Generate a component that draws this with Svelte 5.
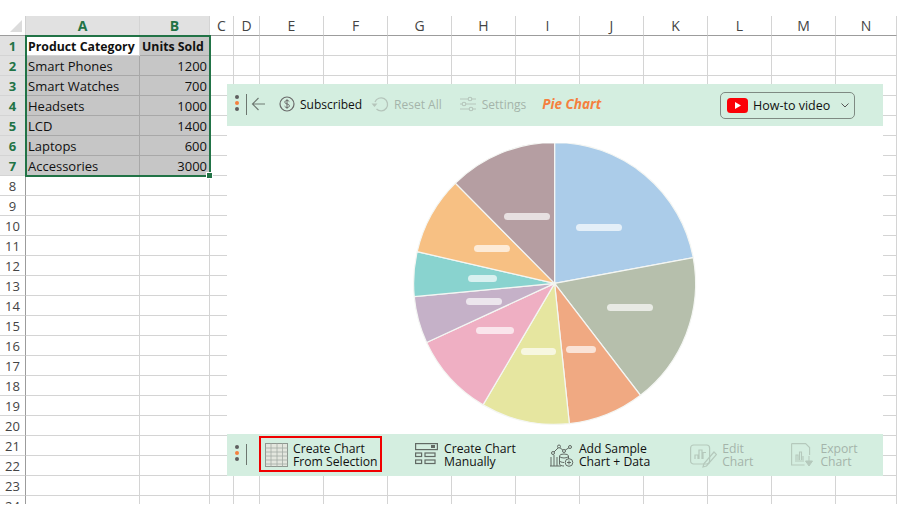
<script>
  const cols = [
    { l: 'A', w: 114, on: true }, { l: 'B', w: 70, on: true }, { l: 'C', w: 24 }, { l: 'D', w: 26 },
    { l: 'E', w: 64 }, { l: 'F', w: 64 }, { l: 'G', w: 64 }, { l: 'H', w: 64 }, { l: 'I', w: 64 },
    { l: 'J', w: 64 }, { l: 'K', w: 64 }, { l: 'L', w: 64 }, { l: 'M', w: 64 }, { l: 'N', w: 61 }
  ];
  const data = [
    ['Product Category', 'Units Sold'], ['Smart Phones', 1200], ['Smart Watches', 700], ['Headsets', 1000],
    ['LCD', 1400], ['Laptops', 600], ['Accessories', 3000]
  ];
  const rows = Array.from({ length: 24 }, (_, i) => i + 1);
  const template = '26px ' + cols.map((c) => c.w + 'px').join(' ');

  const cx = 154.6, cy = 140.4, r = 141;
  const slices = [
    { a: 0, b: 79.5, c: '#abcce9', x: 176, y: 81, w: 46 },
    { a: 79.5, b: 142.5, c: '#b6bfac', x: 207, y: 161, w: 46 },
    { a: 142.5, b: 174, c: '#f0a982', x: 166, y: 203, w: 30 },
    { a: 174, b: 210.5, c: '#e6e6a0', x: 121, y: 205, w: 35 },
    { a: 210.5, b: 245.2, c: '#efafc3', x: 76, y: 184, w: 38 },
    { a: 245.2, b: 264.6, c: '#c5b1c8', x: 66, y: 155, w: 36 },
    { a: 264.6, b: 283, c: '#89d3cf', x: 68, y: 132, w: 29 },
    { a: 283, b: 315.3, c: '#f7c083', x: 74, y: 102, w: 36 },
    { a: 315.3, b: 360, c: '#b59ea2', x: 104, y: 70, w: 46 }
  ];
  function pt(d) {
    const t = (d * Math.PI) / 180;
    return (cx + r * Math.sin(t)).toFixed(2) + ' ' + (cy - r * Math.cos(t)).toFixed(2);
  }
  function arc(s) {
    const large = s.b - s.a > 180 ? 1 : 0;
    return `M${cx} ${cy}L${pt(s.a)}A${r} ${r} 0 ${large} 1 ${pt(s.b)}Z`;
  }
</script>

<div class="page">
  <div class="sheet" style="grid-template-columns:{template}">
    <div class="corner"><svg width="12" height="12" viewBox="0 0 12 12"><path d="M12 0V12H0Z" fill="#dcdcdc" /></svg></div>
    {#each cols as c}
      <div class="colhead" class:on={c.on}>{c.l}</div>
    {/each}
    {#each rows as n}
      <div class="rowhead" class:on={n <= 7}>{n}</div>
      {#each cols as c, i}
        {#if n <= 7 && i === 0}
          <div class="cell" class:sel={n > 1} class:bold={n === 1}>{data[n - 1][0]}</div>
        {:else if n <= 7 && i === 1}
          <div class="cell sel" class:bold={n === 1} class:num={n > 1}>{data[n - 1][1]}</div>
        {:else}
          <div class="cell"></div>
        {/if}
      {/each}
    {/each}
  </div>

  <div class="selection"><span class="handle"></span></div>

  <div class="panel">
    <div class="bar top">
      <span class="dots"><i></i><i class="o"></i><i></i></span>
      <span class="sep"></span>
      <svg class="back" width="15" height="14" viewBox="0 0 15 14"><path d="M14 7H1.500M7.500 1L1.500 7l6 6" fill="none" stroke="#6f7a73" stroke-width="1.200" /></svg>
      <svg class="dollar" width="16" height="16" viewBox="0 0 16 16"><circle cx="8" cy="8" r="7" fill="none" stroke="#6a6a6a" stroke-width="1.200" /><path d="M10.300 5.600C9.800 4.800 9 4.500 8 4.500c-1.300 0-2.200.6-2.200 1.700 0 2.400 4.600 1.100 4.600 3.600 0 1.100-1 1.700-2.300 1.700-1.100 0-2-.4-2.500-1.300M8 3.200v9.600" fill="none" stroke="#6a6a6a" stroke-width="1" /></svg>
      <span class="t sub">Subscribed</span>
      <svg class="reset" width="18" height="16" viewBox="0 0 18 16"><path d="M4 6a6.500 6.500 0 1 1 1.500 7" fill="none" stroke="#b5c5bb" stroke-width="1.300" /><path d="M0.500 7.500h6L3.500 11Z" fill="#b5c5bb" /></svg>
      <span class="t dim resettext">Reset All</span>
      <svg class="sliders" width="16" height="16" viewBox="0 0 16 16"><g fill="none" stroke="#b5c5bb" stroke-width="1.100"><path d="M0 3h8M12 3h4M0 8h2M6 8h10M0 13h9M13 13h3" /><circle cx="10" cy="3" r="1.800" /><circle cx="4" cy="8" r="1.800" /><circle cx="11" cy="13" r="1.800" /></g></svg>
      <span class="t dim settext">Settings</span>
      <span class="title">Pie Chart</span>
      <div class="howto">
        <svg width="21" height="15" viewBox="0 0 21 15"><rect width="21" height="15" rx="3.500" fill="#fb0007" /><path d="M8 4l6 3.500-6 3.500Z" fill="#fff" /></svg>
        <span class="t vid">How-to video</span>
        <svg class="chev" width="8" height="5" viewBox="0 0 8 5"><path d="M.5.500L4 4 7.500.500" fill="none" stroke="#555" stroke-width="1" /></svg>
      </div>
    </div>

    <div class="chart">
      <svg width="310" height="284" viewBox="0 0 310 284">
        {#each slices as s}
          <path d={arc(s)} fill={s.c} stroke="#f4f6f3" stroke-width="1.200" />
        {/each}
        {#each slices as s}
          <rect x={s.x} y={s.y} width={s.w} height="7" rx="3.500" fill="#fff" fill-opacity="0.68" />
        {/each}
      </svg>
    </div>

    <div class="bar bottom">
      <span class="dots"><i></i><i class="o"></i><i></i></span>
      <span class="sep"></span>
      <div class="action first">
        <svg width="23" height="24" viewBox="0 0 23 24"><rect x=".5" y=".5" width="22" height="23" fill="#e3e6de" stroke="#8f9891" /><path d="M.5 5h22M.5 9h22M.5 13h22M.5 17h22M.5 21h22M6 .500v23M12 .500v23M17.500 .500v23" stroke="#a3aba5" fill="none" stroke-width=".8" /></svg>
        <span class="lbl">Create Chart<br />From Selection</span>
      </div>
      <div class="action second">
        <svg width="23" height="24" viewBox="0 0 23 24"><g fill="none" stroke="#626a64" stroke-width="1.200"><rect x=".6" y=".6" width="21.800" height="6" /><rect x=".6" y="10" width="6" height="3.500" /><rect x="10" y="10" width="10" height="3.500" /><rect x=".6" y="17" width="6" height="3.500" /><rect x="10" y="17" width="10" height="3.500" /></g><rect x="16" y="2" width="4" height="3" fill="#626a64" /></svg>
        <span class="lbl wide">Create Chart<br />Manually</span>
      </div>
      <div class="action third">
        <svg width="24" height="24" viewBox="0 0 24 24"><g fill="none" stroke="#626a64" stroke-width="1"><path d="M3 10L9 4l5 4 6-4" /><circle cx="3" cy="10" r="1.500" fill="#d4eee0" /><circle cx="9" cy="3.500" r="1.500" fill="#d4eee0" /><circle cx="14" cy="8" r="1.500" fill="#d4eee0" /><circle cx="20" cy="4" r="1.500" fill="#d4eee0" /><path d="M1 14v9M4 12v11M7 14v9M0 23h11" /><ellipse cx="14" cy="13" rx="4.500" ry="2" /><path d="M9.500 13v8c0 1 2 2 4.500 2M18.500 13v3M9.500 17.500c0 1 2 2 4.500 2" /><circle cx="19" cy="19.500" r="3.800" fill="#d4eee0" /><path d="M19 17.500v4M17 19.500h4" /></g></svg>
        <span class="lbl">Add Sample<br />Chart + Data</span>
      </div>
      <div class="action fourth">
        <svg width="27" height="25" viewBox="0 0 27 25"><g fill="none" stroke="#b5c9bc" stroke-width="1.200"><rect x=".6" y="2" width="19" height="19" rx="3" /><path d="M5 16v-4h3v4M9 16V7h3v9M13 16V9.500h3" /><path d="M13 24l1-3.500L24 9l2.500 2.500L16.500 23Z" /></g></svg>
        <span class="lbl dim">Edit<br />Chart</span>
      </div>
      <div class="action fifth">
        <svg width="23" height="24" viewBox="0 0 23 24"><g fill="none" stroke="#b5c9bc" stroke-width="1.100"><path d="M.6.600h14l4 4V12M.6.600V22h13" /><path d="M4 18h9M5 17v-5h2v5M8.500 17v-8h2v8M12 17v-4" /></g><path d="M18 13v6M14.500 18h7L18 23Z" fill="#b5c9bc" stroke="#b5c9bc" /></svg>
        <span class="lbl dim wide">Export<br />Chart</span>
      </div>
    </div>
  </div>
</div>

<style>
  :global(body) {
    margin: 0;
    background: #fff;
  }
  .page {
    position: relative;
    width: 900px;
    height: 520px;
    overflow: hidden;
    font-family: "Open Sans", "Noto Sans", sans-serif;
    background: #fff;
  }
  .sheet {
    display: grid;
    grid-auto-rows: 20px;
    height: 488px;
    overflow: hidden;
    position: absolute;
    top: 16px;
    left: 0;
    font-size: 13px;
    color: #111;
  }
  .corner {
    display: flex;
    align-items: flex-end;
    justify-content: flex-end;
    padding: 0 3px 3px 0;
    box-sizing: border-box;
    height: 20px;
    border-bottom: 1px solid #9c9c9c;
    border-right: 1px solid #d0d0d0;
  }
  .corner svg {
    flex: none;
  }
  .colhead {
    box-sizing: border-box;
    border-right: 1px solid #d4d4d4;
    border-bottom: 1px solid #9c9c9c;
    text-align: center;
    line-height: 20px;
    color: #444;
    font-size: 14px;
  }
  .colhead.on {
    background: #e1e1e1;
    color: #217346;
    font-weight: 700;
  }
  .rowhead {
    box-sizing: border-box;
    border-right: 1px solid #9c9c9c;
    border-bottom: 1px solid #d4d4d4;
    text-align: center;
    line-height: 21px;
    color: #444;
  }
  .rowhead.on {
    background: #e1e1e1;
    color: #217346;
    font-weight: 700;
  }
  .cell {
    box-sizing: border-box;
    border-right: 1px solid #d4d4d4;
    border-bottom: 1px solid #d4d4d4;
    padding: 0 2px;
    line-height: 21px;
    white-space: nowrap;
    overflow: hidden;
  }
  .cell.sel {
    background: #c6c6c6;
    border-color: #a8a8a8;
  }
  .cell.bold {
    font-weight: 700;
    font-size: 12.300px;
  }
  .cell.num {
    text-align: right;
  }
  .selection {
    position: absolute;
    left: 25px;
    top: 35px;
    width: 186px;
    height: 142px;
    box-sizing: border-box;
    border: 2px solid #217346;
  }
  .handle {
    position: absolute;
    right: -4px;
    bottom: -4px;
    width: 5px;
    height: 5px;
    background: #217346;
    border: 1px solid #fff;
  }
  .panel {
    position: absolute;
    left: 227px;
    top: 84px;
    width: 656px;
    height: 392px;
    background: #fff;
    display: flex;
    flex-direction: column;
  }
  .bar {
    flex: none;
    height: 42px;
    box-sizing: border-box;
    background: #d4eee0;
    display: flex;
    align-items: center;
    font-size: 12px;
    color: #111;
  }
  .bar.top {
    padding-bottom: 2px;
  }
  .dots {
    display: flex;
    flex-direction: column;
    gap: 2px;
    margin-left: 8px;
    width: 4px;
    margin-bottom: 2px;
  }
  .bottom .dots {
    margin-bottom: 4px;
  }
  .bottom .sep {
    margin-bottom: 2px;
  }
  .dots i {
    display: block;
    width: 4px;
    height: 4px;
    border-radius: 50%;
    background: #5f5f5f;
  }
  .dots i.o {
    background: #f5803e;
  }
  .sep {
    width: 1px;
    height: 21px;
    margin-left: 7px;
    background: #6c766f;
  }
  .t {
    white-space: nowrap;
  }
  .dim {
    color: #a4b4aa;
  }
  .back {
    margin-left: 4px;
  }
  .dollar {
    margin-left: 13px;
  }
  .sub {
    margin-left: 5px;
  }
  .reset {
    margin-left: 9px;
  }
  .resettext {
    margin-left: 5px;
  }
  .sliders {
    margin-left: 18px;
  }
  .settext {
    margin-left: 6px;
  }
  .title {
    margin-left: 16px;
    color: #f5803e;
    font-weight: 700;
    font-style: italic;
    font-size: 13.500px;
    white-space: nowrap;
  }
  .howto {
    margin-left: auto;
    margin-right: 28px;
    margin-top: 2px;
    width: 135px;
    height: 27px;
    box-sizing: border-box;
    border: 1px solid #7f8a83;
    border-radius: 5px;
    display: flex;
    align-items: center;
    padding-left: 6px;
    font-size: 12.500px;
  }
  .vid {
    margin-left: 5px;
  }
  .chev {
    margin-left: auto;
    margin-right: 5px;
  }
  .chart {
    flex: 1;
    display: flex;
    justify-content: center;
    padding-top: 17px;
    box-sizing: border-box;
    min-height: 0;
  }
  .chart svg {
    margin-left: -1px;
  }
  .action {
    display: flex;
    align-items: center;
    white-space: nowrap;
  }
  .lbl {
    line-height: 13px;
    margin-left: 5px;
    font-size: 12.200px;
  }
  .lbl.wide {
    margin-left: 6px;
  }
  .first {
    box-sizing: border-box;
    height: 36px;
    width: 123px;
    margin-left: 12px;
    margin-bottom: 2px;
    padding-left: 4px;
    border: 2px solid #f00000;
  }
  .first svg {
    margin-top: 2px;
  }
  .first .lbl {
    margin-top: 2px;
  }
  .second {
    margin-left: 33px;
  }
  .third {
    margin-left: 34px;
  }
  .fourth {
    margin-left: 40px;
  }
  .fifth {
    margin-left: 38px;
  }
</style>
